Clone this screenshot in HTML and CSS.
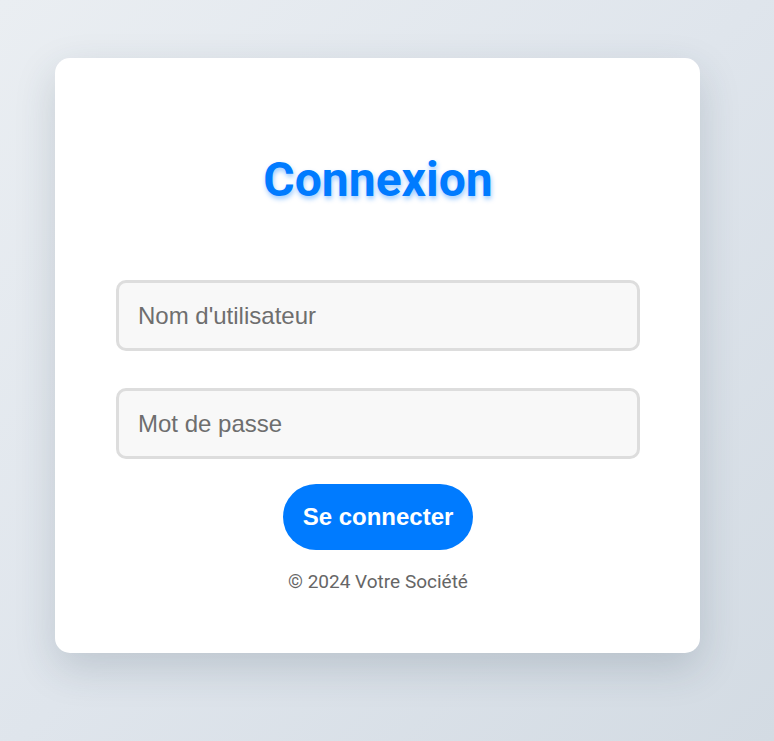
FILE: index.html
```html
<!DOCTYPE html>
<html lang="fr">
<head>
<meta charset="utf-8">
<title>Connexion</title>
<link rel="stylesheet" href="styles.css">
</head>
<body>
<main class="card">
  <h1 class="title">Connexion</h1>
  <form class="form">
    <input class="field" type="text" placeholder="Nom d'utilisateur">
    <input class="field" type="password" placeholder="Mot de passe">
    <button class="btn" type="button">Se connecter</button>
  </form>
  <p class="footer">© 2024 Votre Société</p>
</main>
</body>
</html>
```
FILE: styles.css
```css
html, body {
  margin: 0;
  height: 100%;
}
body {
  background: linear-gradient(135deg, #eaeef2 0%, #dfe5ec 50%, #d3dbe3 100%);
  padding: 58px 0 0 55px;
  box-sizing: border-box;
  font-family: "Liberation Sans", Arial, sans-serif;
}
.card {
  width: 645px;
  height: 595px;
  box-sizing: border-box;
  background: #fff;
  border-radius: 15px;
  box-shadow: 0 15px 40px rgba(40, 60, 80, 0.18);
  padding: 94px 60px 0 61px;
  display: flex;
  flex-direction: column;
  align-items: center;
}
.title {
  margin: 0;
  font-family: Roboto, sans-serif;
  font-weight: 700;
  font-size: 48px;
  line-height: 56px;
  color: #007bff;
  text-shadow: 1px 3px 5px rgba(0, 123, 255, 0.4);
}
.form {
  width: 100%;
  margin-top: 72px;
  display: flex;
  flex-direction: column;
  align-items: center;
}
.field {
  width: 100%;
  height: 71px;
  box-sizing: border-box;
  border: 3px solid #dddddd;
  border-radius: 10px;
  background: #f8f8f8;
  padding: 0 19px;
  font-family: "Liberation Sans", Arial, sans-serif;
  font-size: 24px;
  color: #333;
  margin-bottom: 37px;
}
.field:last-of-type {
  margin-bottom: 25px;
}
.field::placeholder {
  color: #6e6e6e;
}
.btn {
  height: 66px;
  padding: 0 20px;
  border: none;
  border-radius: 33px;
  background: #007bff;
  color: #fff;
  font-family: "Liberation Sans", Arial, sans-serif;
  font-weight: 700;
  font-size: 24px;
}
.footer {
  margin: 20px 0 0;
  font-family: Roboto, sans-serif;
  font-size: 19px;
  color: #666;
}
```
